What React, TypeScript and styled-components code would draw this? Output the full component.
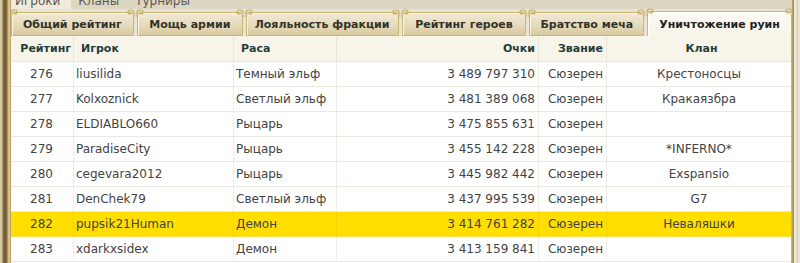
import React from "react";
import styled, { createGlobalStyle } from "styled-components";

const Global = createGlobalStyle`
  html, body { margin: 0; padding: 0; background: #e9e3d0; }
  body { font-family: "DejaVu Sans", Verdana, sans-serif; }
`;

const Page = styled.div`
  width: 800px;
  height: 263px;
  overflow: hidden;
  display: flex;
  background: #e9e3d0;
`;

const LeftFrame = styled.div`
  width: 11px;
  flex: none;
  background: linear-gradient(
    to right,
    #d9cfae 0px, #cdbf92 2px, #8c7547 3px, #6d5632 5px, #8a7142 7px,
    #cdb880 8px, #dccb94 10px, #b9a466 10px, #b9a466 11px
  );
`;

const RightFrame = styled.div`
  width: 8px;
  flex: none;
  background: linear-gradient(
    to right,
    #b7a46c 0px, #a38f5d 2px, #ece6d3 2px, #ece6d3 5px, #d6caa2 5px, #d6caa2 6px, #ebe5d1 6px
  );
`;

const Main = styled.div`
  flex: 1;
  display: flex;
  flex-direction: column;
  min-width: 0;
`;

const TopNav = styled.div`
  height: 9px;
  overflow: hidden;
  display: flex;
  background: #ddd6c2;
  color: #5b5a55;
  font-size: 12px;
`;

const NavItem = styled.div<{ $active?: boolean }>`
  height: 16px;
  line-height: 16px;
  margin-top: -7px;
  padding: 0 ${(p) => (p.$active ? "11px 0 4px" : "9px 0 7px")};
  background: ${(p) => (p.$active ? "#efeadb" : "transparent")};
`;

const TabBar = styled.div`
  height: 27px;
  display: flex;
  align-items: flex-end;
  gap: 3px;
  background: #e9e3d0;
`;

const Tab = styled.div<{ $active?: boolean; $w: number }>`
  position: relative;
  box-sizing: border-box;
  width: ${(p) => p.$w}px;
  height: ${(p) => (p.$active ? 25 : 24)}px;
  border: 1px solid #c9b678;
  border-bottom: ${(p) => (p.$active ? "none" : "1px solid #c9b678")};
  border-radius: 3px 3px 0 0;
  background: ${(p) =>
    p.$active
      ? "linear-gradient(#fbf9f2, #f7f4ea)"
      : "linear-gradient(#f1ead6 0%, #e4d9b8 60%, #d8caa0 100%)"};
  box-shadow: inset 1px 1px 0 ${(p) => (p.$active ? "#ffffff" : "#f8f3e3")};
  display: flex;
  align-items: center;
  justify-content: center;
  font-size: 11px;
  font-weight: bold;
  color: ${(p) => (p.$active ? "#1f1f1f" : "#33332c")};
  white-space: nowrap;
  padding-top: 1px;
`;

const Curl = styled.svg<{ $side: "l" | "r" }>`
  position: absolute;
  top: -4px;
  ${(p) => (p.$side === "l" ? "left: -2px;" : "right: -2px;")}
  width: 9px;
  height: 8px;
`;

const CornerCurl = ({ side }: { side: "l" | "r" }) => (
  <Curl $side={side} viewBox="0 0 9 8">
    <g transform={side === "r" ? "translate(9,0) scale(-1,1)" : undefined}>
      <path d="M1 8 L1 4 Q1 1 4 1 Q7 1 7 3 Q7 5 5 5 Q3.5 5 4 3.5" fill="none" stroke="#c2ad68" strokeWidth="1.2" />
      <path d="M1 4 L3 6 L1 7 Z" fill="#d8c88a" />
    </g>
  </Curl>
);

const Table = styled.div`
  flex: 1;
  background: #ffffff;
  border-right: 1px solid #c9b678;
  font-size: 12px;
`;

const cols = "62px 160px 103px 202px 68px 186px";

const HeadRow = styled.div`
  display: grid;
  grid-template-columns: ${cols};
  height: 26px;
  background: #f7f4ea;
  border-bottom: 1px solid #ebe6d8;
  box-sizing: border-box;
`;

const HeadCell = styled.div<{ $align: "left" | "right" | "center" }>`
  display: flex;
  align-items: center;
  justify-content: ${(p) =>
    p.$align === "left" ? "flex-start" : p.$align === "right" ? "flex-end" : "center"};
  padding: 0 3px 0 7px;
  font-size: 11px;
  font-weight: bold;
  color: #233d3c;
  border-left: 1px solid #ebe6d8;
  &:first-child { border-left: none; padding-right: 2px; }
`;

const Row = styled.div<{ $hl?: boolean }>`
  display: grid;
  grid-template-columns: ${cols};
  height: 25px;
  box-sizing: border-box;
  border-bottom: 1px solid ${(p) => (p.$hl ? "#f4df4a" : "#ece9e1")};
  background: ${(p) => (p.$hl ? "#ffde00" : "#ffffff")};
  color: #434343;
`;

const Cell = styled.div<{ $align: "left" | "right" | "center"; $hl?: boolean }>`
  display: flex;
  align-items: center;
  justify-content: ${(p) =>
    p.$align === "left" ? "flex-start" : p.$align === "right" ? "flex-end" : "center"};
  padding: 0 3px 0 2px;
  white-space: nowrap;
  border-left: 1px solid ${(p) => (p.$hl ? "#f2d500" : "#efece4")};
  &:first-child { border-left: none; }
`;

const tabs = [
  { t: "Общий рейтинг", w: 123 },
  { t: "Мощь армии", w: 106 },
  { t: "Лояльность фракции", w: 153 },
  { t: "Рейтинг героев", w: 125 },
  { t: "Братство меча", w: 115 },
  { t: "Уничтожение руин", w: 145, active: true },
];

const rows = [
  ["276", "liusilida", "Темный эльф", "3 489 797 310", "Сюзерен", "Крестоносцы"],
  ["277", "Kolxoznick", "Светлый эльф", "3 481 389 068", "Сюзерен", "Кракаязбра"],
  ["278", "ELDIABLO660", "Рыцарь", "3 475 855 631", "Сюзерен", ""],
  ["279", "ParadiseCity", "Рыцарь", "3 455 142 228", "Сюзерен", "*INFERNO*"],
  ["280", "cegevara2012", "Рыцарь", "3 445 982 442", "Сюзерен", "Exspansio"],
  ["281", "DenChek79", "Светлый эльф", "3 437 995 539", "Сюзерен", "G7"],
  ["282", "pupsik21Human", "Демон", "3 414 761 282", "Сюзерен", "Неваляшки"],
  ["283", "xdarkxsidex", "Демон", "3 413 159 841", "Сюзерен", ""],
];

const aligns: ("left" | "right" | "center")[] = ["center", "left", "left", "right", "right", "center"];
const headAligns: ("left" | "right" | "center")[] = ["right", "left", "left", "right", "right", "center"];
const heads = ["Рейтинг", "Игрок", "Раса", "Очки", "Звание", "Клан"];

export default function App() {
  return (
    <>
      <Global />
      <Page>
        <LeftFrame />
        <Main>
          <TopNav>
            <NavItem $active>Игроки</NavItem>
            <NavItem>Кланы</NavItem>
            <NavItem>Турниры</NavItem>
          </TopNav>
          <TabBar>
            {tabs.map((tb) => (
              <Tab key={tb.t} $w={tb.w} $active={tb.active}>
                <CornerCurl side="l" />
                {tb.t}
                <CornerCurl side="r" />
              </Tab>
            ))}
          </TabBar>
          <Table>
            <HeadRow>
              {heads.map((h, i) => (
                <HeadCell key={h} $align={headAligns[i]}>{h}</HeadCell>
              ))}
            </HeadRow>
            {rows.map((r) => {
              const hl = r[0] === "282";
              return (
                <Row key={r[0]} $hl={hl}>
                  {r.map((c, i) => (
                    <Cell key={i} $align={aligns[i]} $hl={hl}>{c}</Cell>
                  ))}
                </Row>
              );
            })}
          </Table>
        </Main>
        <RightFrame />
      </Page>
    </>
  );
}
